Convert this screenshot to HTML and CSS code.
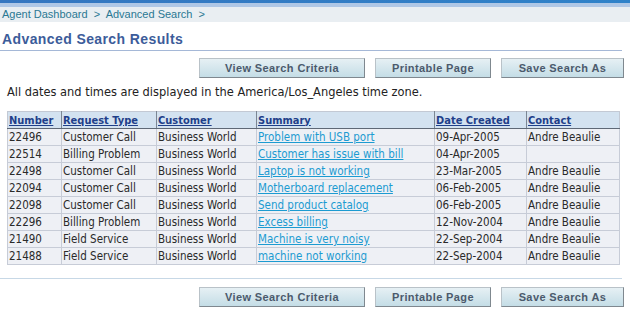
FILE: index.html
```html
<!DOCTYPE html>
<html lang="en">
<head>
    <meta charset="UTF-8">
    <title>Advanced Search Results</title>
    <link rel="stylesheet" href="styles.css">
</head>
<body>

<div class="topbar"></div>
<div class="crumbs">Agent Dashboard &nbsp;&gt;&nbsp; Advanced Search &nbsp;&gt;</div>

<h1 class="title">Advanced Search Results</h1>

<div class="buttons">
    <button class="btn btn-criteria">View Search Criteria</button>
    <button class="btn btn-print">Printable Page</button>
    <button class="btn btn-save">Save Search As</button>
</div>

<p class="note">All dates and times are displayed in the America/Los_Angeles time zone.</p>

<table class="results">
    <colgroup>
        <col class="c-num">
        <col class="c-type">
        <col class="c-cust">
        <col class="c-sum">
        <col class="c-date">
        <col class="c-contact">
    </colgroup>
    <thead>
        <tr>
            <th><a href="#">Number</a></th>
            <th><a href="#">Request Type</a></th>
            <th><a href="#">Customer</a></th>
            <th><a href="#">Summary</a></th>
            <th><a href="#">Date Created</a></th>
            <th><a href="#">Contact</a></th>
        </tr>
    </thead>
    <tbody>
        <tr><td>22496</td><td>Customer Call</td><td>Business World</td><td><a href="#">Problem with USB port</a></td><td>09-Apr-2005</td><td>Andre Beaulie</td></tr>
        <tr><td>22514</td><td>Billing Problem</td><td>Business World</td><td><a href="#">Customer has issue with bill</a></td><td>04-Apr-2005</td><td></td></tr>
        <tr><td>22498</td><td>Customer Call</td><td>Business World</td><td><a href="#">Laptop is not working</a></td><td>23-Mar-2005</td><td>Andre Beaulie</td></tr>
        <tr><td>22094</td><td>Customer Call</td><td>Business World</td><td><a href="#">Motherboard replacement</a></td><td>06-Feb-2005</td><td>Andre Beaulie</td></tr>
        <tr><td>22098</td><td>Customer Call</td><td>Business World</td><td><a href="#">Send product catalog</a></td><td>06-Feb-2005</td><td>Andre Beaulie</td></tr>
        <tr><td>22296</td><td>Billing Problem</td><td>Business World</td><td><a href="#">Excess billing</a></td><td>12-Nov-2004</td><td>Andre Beaulie</td></tr>
        <tr><td>21490</td><td>Field Service</td><td>Business World</td><td><a href="#">Machine is very noisy</a></td><td>22-Sep-2004</td><td>Andre Beaulie</td></tr>
        <tr><td>21488</td><td>Field Service</td><td>Business World</td><td><a href="#">machine not working</a></td><td>22-Sep-2004</td><td>Andre Beaulie</td></tr>
    </tbody>
</table>

<div class="divider"></div>

<div class="buttons buttons-bottom">
    <button class="btn btn-criteria">View Search Criteria</button>
    <button class="btn btn-print">Printable Page</button>
    <button class="btn btn-save">Save Search As</button>
</div>

</body>
</html>
```

FILE: styles.css
```css
body {
    font-family: "Liberation Sans", Arial, sans-serif;
    background-color: #ffffff;
    color: #222222;
    margin: 0;
    padding: 0;
}

.topbar {
    height: 3px;
    background: linear-gradient(to right, #3576c0, #2f82c9);
    border-bottom: 4px solid #afc7e6;
}

.crumbs {
    height: 15px;
    line-height: 15px;
    padding-left: 2px;
    font-size: 11px;
    color: #2a7893;
    background-color: #e9eef2;
}

.title {
    margin: 8px 8px 0 0;
    padding: 0 0 2px 2px;
    height: 18px;
    line-height: 19px;
    font-size: 14px;
    letter-spacing: 0.4px;
    color: #3c5c9a;
    border-bottom: 1px solid #a5b8d7;
}

.buttons {
    display: flex;
    justify-content: flex-end;
    gap: 10px;
    margin: 7px 6px 0 0;
}

.btn {
    height: 20px;
    padding: 0;
    font-family: "Liberation Sans", Arial, sans-serif;
    font-size: 11px;
    font-weight: bold;
    letter-spacing: 0.4px;
    color: #4b5a6c;
    background: linear-gradient(#e6f0f4, #c4dde6);
    border: 1px solid;
    border-color: #b9c2c8 #7f888f #7f888f #b9c2c8;
    cursor: pointer;
}

.btn-criteria {
    width: 166px;
}

.btn-print {
    width: 116px;
}

.btn-save {
    width: 123px;
}

.note {
    margin: 6px 0 0 7px;
    font-family: "DejaVu Sans Condensed", "DejaVu Sans", sans-serif;
    font-size: 12.7px;
    line-height: 16px;
    color: #222222;
}

.results {
    margin: 11px 0 0 7px;
    border-collapse: collapse;
    table-layout: fixed;
    width: 612px;
    font-family: "DejaVu Sans Condensed", "DejaVu Sans", sans-serif;
    font-size: 11.5px;
    border: 1px solid #c3c9d4;
}

.c-num { width: 54px; }
.c-type { width: 95px; }
.c-cust { width: 100px; }
.c-sum { width: 178px; }
.c-date { width: 92px; }
.c-contact { width: 93px; }

.results th {
    height: 16px;
    padding: 0 1px;
    font-size: 11px;
    text-align: left;
    background-color: #d3e2f0;
    border-left: 1px solid #7c8794;
    border-bottom: 1px solid #5e6876;
    white-space: nowrap;
}

.results th:first-child {
    border-left-color: #c3c9d4;
}

.results th a {
    color: #1f3f8a;
    text-decoration: underline;
}

.results td {
    height: 16px;
    padding: 0 1px;
    line-height: 16px;
    color: #2a2a2a;
    background-color: #eef0f5;
    border: 1px solid #c7ccd7;
    white-space: nowrap;
}

.results td a {
    color: #1c9bd1;
    text-decoration: underline;
}

.divider {
    margin: 13px 8px 0 0;
    border-top: 1px solid #c7d8e6;
}

.buttons-bottom {
    margin-top: 8px;
}
```
